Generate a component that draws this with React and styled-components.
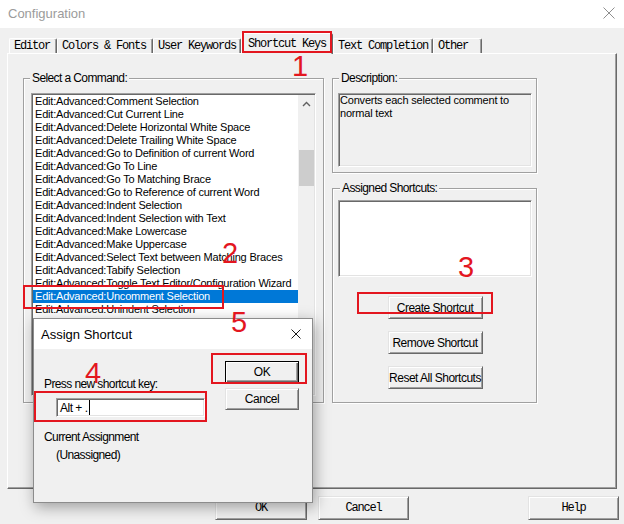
import React from 'react';
import styled, { createGlobalStyle } from 'styled-components';

const UI = '"Liberation Sans", Arial, sans-serif';
const MONO = '"Liberation Mono", "Courier New", monospace';
const RED = '#e3161f';

const GlobalStyle = createGlobalStyle`
  * { box-sizing: border-box; }
  html, body { margin: 0; padding: 0; background: #f0f0f0; }
  body { font-family: ${UI}; color: #000; overflow: hidden; }
`;

const Window = styled.div`
  position: relative;
  width: 624px;
  height: 524px;
  background: #f0f0f0;
  display: flex;
  flex-direction: column;
  overflow: hidden;
`;

const TitleBar = styled.div`
  height: 28px;
  flex: none;
  background: #fff;
  display: flex;
  align-items: center;
  justify-content: space-between;
  padding: 0 9px 0 8px;
`;

const TitleText = styled.span`
  font-family: ${UI};
  font-size: 13px;
  color: #9b9b9b;
  padding-bottom: 2px;
`;

const CloseBox = styled.span`
  display: flex;
  margin-bottom: ${p => p.$lift}px;
`;

const CloseIcon = ({ size, color, lift = 0 }) => (
  <CloseBox $lift={lift}>
    <svg width={size} height={size} viewBox={`0 0 ${size} ${size}`}>
      <path
        d={`M0.5 0.5 L${size - 0.5} ${size - 0.5} M${size - 0.5} 0.5 L0.5 ${size - 0.5}`}
        stroke={color}
        strokeWidth="1"
        fill="none"
      />
    </svg>
  </CloseBox>
);

const Main = styled.div`
  flex: 1;
  display: flex;
  flex-direction: column;
  padding: 0 7px;
`;

const TabStrip = styled.div`
  height: 25px;
  flex: none;
  display: flex;
  align-items: flex-end;
  padding-left: 2px;
`;

const Tab = styled.div`
  width: ${p => p.$w}px;
  height: ${p => (p.$active ? 21 : 15)}px;
  margin-bottom: ${p => (p.$active ? -1 : 0)}px;
  position: relative;
  z-index: ${p => (p.$active ? 2 : 0)};
  background: #f0f0f0;
  border-top: 1px solid #fff;
  border-left: 1px solid #fff;
  border-right: 1px solid #696969;
  box-shadow: inset -1px 0 0 #a0a0a0;
  border-radius: 2px 2px 0 0;
  display: flex;
  align-items: center;
  padding: ${p => (p.$active ? '0 0 1px 6px' : '0 0 0 4px')};
  font-family: ${MONO};
  font-size: 12px;
  letter-spacing: -1.2px;
  white-space: nowrap;
`;

const Panel = styled.div`
  height: 436px;
  flex: none;
  border: 1px solid;
  border-color: #fff #696969 #696969 #fff;
  box-shadow: inset -1px -1px 0 #a0a0a0;
  display: flex;
  align-items: flex-start;
  gap: 8px;
  padding: 17px 0 0 15px;
`;

const Group = styled.fieldset`
  margin: 0;
  min-width: 0;
  width: ${p => p.$w}px;
  height: ${p => p.$h}px;
  padding: ${p => p.$pt}px ${p => p.$pr}px 0 ${p => p.$pl}px;
  border: 1px solid #a0a0a0;
  box-shadow: inset 1px 1px 0 #fff, 1px 1px 0 #fff;
`;

const Legend = styled.legend`
  padding: 0 2px;
  margin-left: ${p => p.$ml}px;
  font-family: ${UI};
  font-size: 12px;
  line-height: 14px;
  letter-spacing: -0.6px;
  color: #000;
  background: #f0f0f0;
`;

const ListBox = styled.div`
  width: 285px;
  height: 303px;
  display: flex;
  background: #fff;
  border: 1px solid;
  border-color: #a0a0a0 #fff #fff #a0a0a0;
  box-shadow: inset 1px 1px 0 #696969, inset -1px -1px 0 #e3e3e3;
  padding: 1px;
`;

const Items = styled.div`
  flex: 1;
  min-width: 0;
  overflow: hidden;
`;

const Item = styled.div`
  height: 13px;
  line-height: 13px;
  font-family: ${UI};
  font-size: 11px;
  letter-spacing: -0.2px;
  padding-left: 2px;
  white-space: nowrap;
  background: ${p => (p.$selected ? '#0078d7' : 'transparent')};
  color: ${p => (p.$selected ? '#fff' : '#000')};
`;

const ScrollBar = styled.div`
  width: 16px;
  flex: none;
  background: #f0f0f0;
  display: flex;
  flex-direction: column;
`;

const ScrollArrow = styled.div`
  height: 17px;
  display: flex;
  align-items: center;
  justify-content: center;
  padding-left: 1px;
`;

const ScrollThumb = styled.div`
  height: 36px;
  margin: 38px 0 0 1px;
  background: #cdcdcd;
`;

const RightCol = styled.div`
  width: 205px;
  display: flex;
  flex-direction: column;
  gap: 8px;
`;

const InfoBox = styled.div`
  width: 194px;
  height: ${p => p.$h}px;
  background: ${p => (p.$white ? '#fff' : '#f0f0f0')};
  border: 1px solid;
  border-color: #a0a0a0 #fff #fff #a0a0a0;
  box-shadow: inset 1px 1px 0 #696969, inset -1px -1px 0 #e3e3e3;
  padding: 0 0 0 1px;
  font-family: ${UI};
  font-size: 11px;
  line-height: 13px;
  letter-spacing: -0.2px;
  color: #000;
`;

const ButtonStack = styled.div`
  display: flex;
  flex-direction: column;
  align-items: center;
  gap: 12px;
  margin-top: 19px;
`;

const WinButton = styled.button`
  width: ${p => p.$w}px;
  height: ${p => p.$h}px;
  padding: 0;
  margin: 0;
  background: #f0f0f0;
  color: #000;
  font-family: ${p => (p.$mono ? MONO : UI)};
  font-size: 12px;
  letter-spacing: ${p => (p.$mono ? -1.2 : -0.5)}px;
  border: 1px solid;
  border-color: ${p => (p.$default ? '#000' : '#e3e3e3 #696969 #696969 #e3e3e3')};
  box-shadow: ${p =>
    p.$default
      ? 'inset 1px 1px 0 #fff, inset -1px -1px 0 #696969, inset -2px -2px 0 #a0a0a0'
      : 'inset 1px 1px 0 #fff, inset -1px -1px 0 #a0a0a0'};
  white-space: nowrap;
  margin-left: ${p => (p.$push ? 'auto' : '0')};
`;

const ButtonRow = styled.div`
  display: flex;
  gap: 11px;
  margin-top: 7px;
  margin-right: -2px;
  padding-left: 208px;
`;

/* Assign Shortcut dialog (a window lying over the configuration window) */
const Dialog = styled.div`
  position: absolute;
  left: 33px;
  top: 318px;
  width: 280px;
  height: 185px;
  z-index: 4;
  background: #f0f0f0;
  border: 1px solid #8c8c8c;
  box-shadow: 2px 4px 14px rgba(0, 0, 0, 0.35);
  display: flex;
  flex-direction: column;
`;

const DialogTitleBar = styled.div`
  height: 30px;
  flex: none;
  background: #fff;
  display: flex;
  align-items: center;
  justify-content: space-between;
  padding: 0 11px 0 7px;
`;

const DialogTitle = styled.span`
  font-family: ${UI};
  font-size: 13px;
  color: #000;
`;

const DialogBody = styled.div`
  flex: 1;
  display: flex;
  padding-left: 10px;
`;

const DialogLeft = styled.div`
  width: 181px;
  padding-top: 28px;
  display: flex;
  flex-direction: column;
  align-items: flex-start;
`;

const DialogRight = styled.div`
  width: 74px;
  padding-top: 12px;
  display: flex;
  flex-direction: column;
  gap: 5px;
`;

const Label = styled.div`
  font-family: ${UI};
  font-size: 12px;
  line-height: 14px;
  letter-spacing: -0.6px;
  color: #000;
  margin-top: ${p => p.$mt || 0}px;
  margin-left: ${p => p.$ml || 0}px;
`;

const KeyInput = styled.div`
  width: 149px;
  height: 19px;
  margin: 7px 0 0 12px;
  background: #fff;
  border: 1px solid;
  border-color: #a0a0a0 #fff #fff #a0a0a0;
  box-shadow: inset 1px 1px 0 #696969, inset -1px -1px 0 #e3e3e3;
  display: flex;
  align-items: center;
  padding-left: 3px;
  font-family: ${UI};
  font-size: 12px;
  letter-spacing: -0.5px;
`;

const Caret = styled.span`
  display: inline-block;
  width: 1px;
  height: 15px;
  background: #000;
  margin-left: 1px;
`;

/* red annotation marks drawn over the screenshot */
const MarkBox = styled.div`
  position: absolute;
  left: ${p => p.$x}px;
  top: ${p => p.$y}px;
  width: ${p => p.$w}px;
  height: ${p => p.$h}px;
  border: 2px solid ${RED};
  z-index: 6;
  pointer-events: none;
`;

const MarkNum = styled.div`
  position: absolute;
  left: ${p => p.$x}px;
  top: ${p => p.$y}px;
  font-family: ${UI};
  font-size: 29px;
  line-height: 29px;
  color: ${RED};
  z-index: 6;
  pointer-events: none;
`;

const tabs = [
  ['Editor', 48],
  ['Colors & Fonts', 96],
  ['User Keywords', 88],
  ['Shortcut Keys', 92, true],
  ['Text Completion', 100],
  ['Other', 49],
];

const commands = [
  'Comment Selection',
  'Cut Current Line',
  'Delete Horizontal White Space',
  'Delete Trailing White Space',
  'Go to Definition of current Word',
  'Go To Line',
  'Go To Matching Brace',
  'Go to Reference of current Word',
  'Indent Selection',
  'Indent Selection with Text',
  'Make Lowercase',
  'Make Uppercase',
  'Select Text between Matching Braces',
  'Tabify Selection',
  'Toggle Text Editor/Configuration Wizard',
  'Uncomment Selection',
  'Unindent Selection',
];

export default function App() {
  return (
    <>
      <GlobalStyle />
      <Window>
        <TitleBar>
          <TitleText>Configuration</TitleText>
          <CloseIcon size={12} color="#8f8f8f" lift={3} />
        </TitleBar>
        <Main>
          <TabStrip>
            {tabs.map(([label, w, active]) => (
              <Tab key={label} $w={w} $active={active}>
                {label}
              </Tab>
            ))}
          </TabStrip>
          <Panel>
            <Group $w={301} $h={332} $pt={8} $pl={7} $pr={7}>
              <Legend $ml={-1}>Select a Command:</Legend>
              <ListBox>
                <Items>
                  {commands.map(c => (
                    <Item key={c} $selected={c === 'Uncomment Selection'}>
                      Edit:Advanced:{c}
                    </Item>
                  ))}
                </Items>
                <ScrollBar>
                  <ScrollArrow>
                    <svg width="9" height="6" viewBox="0 0 9 6">
                      <path d="M1 5 L4.5 1.5 L8 5" stroke="#606060" strokeWidth="1.4" fill="none" />
                    </svg>
                  </ScrollArrow>
                  <ScrollThumb />
                </ScrollBar>
              </ListBox>
            </Group>
            <RightCol>
              <Group $w={205} $h={102} $pt={8} $pl={5} $pr={4}>
                <Legend $ml={1}>Description:</Legend>
                <InfoBox $h={74}>
                  Converts each selected comment to
                  <br />
                  normal text
                </InfoBox>
              </Group>
              <Group $w={205} $h={222} $pt={5} $pl={5} $pr={4}>
                <Legend $ml={2}>Assigned Shortcuts:</Legend>
                <InfoBox $h={77} $white />
                <ButtonStack>
                  <WinButton $w={95} $h={23}>Create Shortcut</WinButton>
                  <WinButton $w={95} $h={23}>Remove Shortcut</WinButton>
                  <WinButton $w={95} $h={23}>Reset All Shortcuts</WinButton>
                </ButtonStack>
              </Group>
            </RightCol>
          </Panel>
          <ButtonRow>
            <WinButton $w={92} $h={24} $mono>OK</WinButton>
            <WinButton $w={91} $h={24} $mono>Cancel</WinButton>
            <WinButton $w={91} $h={24} $mono $push>Help</WinButton>
          </ButtonRow>
        </Main>

        <Dialog>
          <DialogTitleBar>
            <DialogTitle>Assign Shortcut</DialogTitle>
            <CloseIcon size={10} color="#1a1a1a" />
          </DialogTitleBar>
          <DialogBody>
            <DialogLeft>
              <Label>Press new shortcut key:</Label>
              <KeyInput>
                Alt + .<Caret />
              </KeyInput>
              <Label $mt={13}>Current Assignment</Label>
              <Label $mt={4} $ml={12}>(Unassigned)</Label>
            </DialogLeft>
            <DialogRight>
              <WinButton $w={74} $h={22} $default>OK</WinButton>
              <WinButton $w={74} $h={22}>Cancel</WinButton>
            </DialogRight>
          </DialogBody>
        </Dialog>

        <MarkBox $x={242} $y={31} $w={90} $h={22} />
        <MarkNum $x={292} $y={52}>1</MarkNum>
        <MarkBox $x={23} $y={285} $w={201} $h={24} />
        <MarkNum $x={222} $y={239}>2</MarkNum>
        <MarkBox $x={357} $y={292} $w={136} $h={22} />
        <MarkNum $x={458} $y={253}>3</MarkNum>
        <MarkBox $x={34} $y={391} $w={173} $h={31} />
        <MarkNum $x={85} $y={359}>4</MarkNum>
        <MarkBox $x={211} $y={353} $w={96} $h={31} />
        <MarkNum $x={231} $y={308}>5</MarkNum>
      </Window>
    </>
  );
}
